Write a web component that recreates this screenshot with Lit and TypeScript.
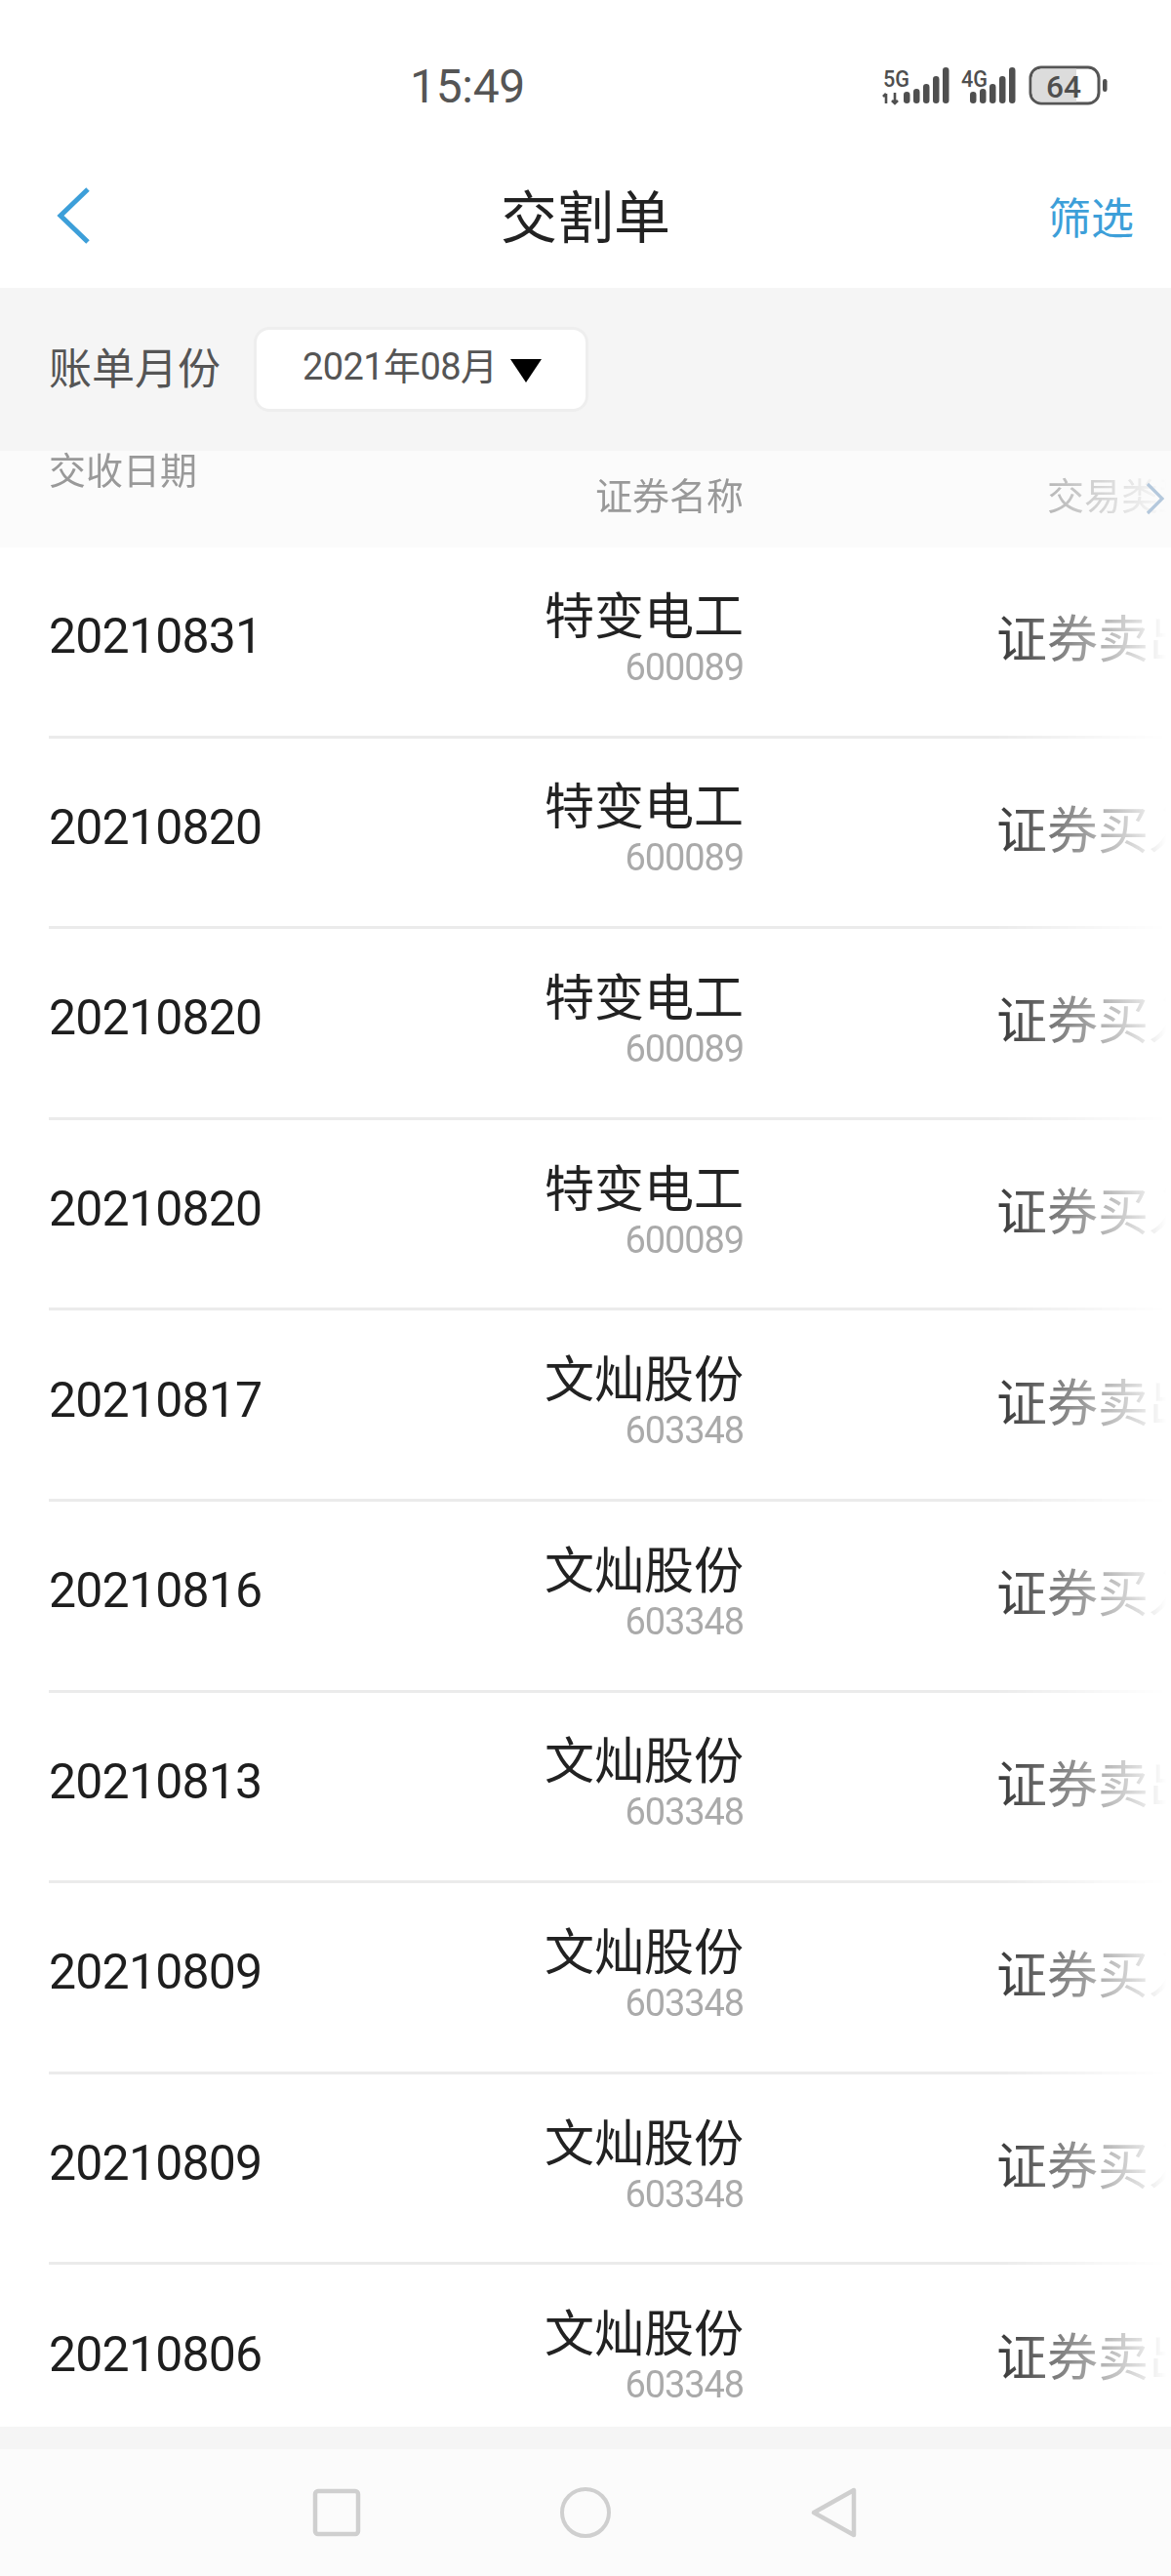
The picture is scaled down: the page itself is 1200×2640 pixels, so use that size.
import { LitElement, html, svg, css } from "lit";
import { customElement } from "lit/decorators.js";

const rows = [
  ["20210831", "特变电工", "600089", "证券卖出"],
  ["20210820", "特变电工", "600089", "证券买入"],
  ["20210820", "特变电工", "600089", "证券买入"],
  ["20210820", "特变电工", "600089", "证券买入"],
  ["20210817", "文灿股份", "603348", "证券卖出"],
  ["20210816", "文灿股份", "603348", "证券买入"],
  ["20210813", "文灿股份", "603348", "证券卖出"],
  ["20210809", "文灿股份", "603348", "证券买入"],
  ["20210809", "文灿股份", "603348", "证券买入"],
  ["20210806", "文灿股份", "603348", "证券卖出"],
];

const bars = (xs: number[]) =>
  xs.map((x, i) => {
    const h = [12, 15, 20, 28, 37][i];
    return svg`<rect x="${x}" y="${107 - h}" width="6.5" height="${h}" rx="3.2" fill="#4f4f4f"></rect>`;
  });

@customElement("app-root")
export class AppRoot extends LitElement {
  static styles = css`
    :host {
      display: block;
      width: 1200px;
      height: 2640px;
      background: #fff;
      overflow: hidden;
      font-family: "Roboto", "Noto Sans CJK SC", sans-serif;
    }
    .page { display: flex; flex-direction: column; height: 2640px; }
    .status {
      height: 175px; flex: none; display: flex; align-items: flex-start;
      padding: 61px 64px 0 420px; box-sizing: border-box;
    }
    .time { font-size: 48px; line-height: 56px; color: #555; letter-spacing: -0.3px; }
    .status svg { margin-left: auto; margin-top: 4px; display: block; }
    .status svg text { font-family: "Roboto", sans-serif; font-weight: 500; fill: #4f4f4f; }
    .nav {
      height: 120px; flex: none; display: flex; align-items: center; box-sizing: border-box;
      justify-content: space-between; padding: 0 38px 28px 56px; position: relative;
    }
    .nav svg { display: block; }
    .title {
      position: absolute; left: 0; right: 0; top: 0; bottom: 32px; display: flex;
      align-items: center; justify-content: center; font-size: 58px; color: #222;
      line-height: 1; font-family: "Noto Sans CJK SC", sans-serif;
    }
    .filter { position: relative; font-size: 44px; line-height: 1; color: #3d9fd9; font-family: "Noto Sans CJK SC", sans-serif; }
    .bar {
      height: 167px; flex: none; background: #f5f5f5; box-sizing: border-box;
      display: flex; align-items: flex-start; padding: 40px 0 0 50px;
    }
    .bar-label {
      font-size: 44px; line-height: 81px; color: #555; width: 210px;
      font-family: "Noto Sans CJK SC", sans-serif;
    }
    .month {
      width: 343px; height: 87px; box-sizing: border-box; background: #fff;
      border: 3px solid #eeeeee; border-radius: 16px; display: flex; align-items: center;
      padding: 0 0 12px 47px; font-size: 38px; color: #555;
    }
    .month span { white-space: nowrap; letter-spacing: -0.6px; }
    .tri {
      width: 0; height: 0; margin: 14px 0 0 14px; border-left: 16px solid transparent;
      border-right: 16px solid transparent; border-top: 24px solid #000;
    }
    .head { height: 99px; flex: none; background: #fbfbfb; position: relative; }
    .cols {
      display: grid; grid-template-columns: 400px 312px 1fr; width: 1200px;
      box-sizing: border-box; padding-left: 50px;
    }
    .fade {
      -webkit-mask-image: linear-gradient(to right, #000 1020px, transparent 1195px);
      mask-image: linear-gradient(to right, #000 1020px, transparent 1195px);
    }
    .head .cols { font-size: 38px; line-height: 40px; color: #999; height: 99px; font-family: "Noto Sans CJK SC", sans-serif; }
    .h1 { margin-top: -2px; }
    .h2 { margin-top: 24px; text-align: right; }
    .h3 { margin-top: 24px; margin-left: 311px; white-space: nowrap; }
    .chev { position: absolute; left: 1172px; top: 31px; display: block; }
    .list { height: 1926px; flex: none; overflow: hidden; }
    .row { height: 195.6px; box-sizing: border-box; }
    .row .cols { height: 192.6px; align-items: center; }
    .sep { height: 3px; margin-left: 50px; background: #ebebeb; }
    .date { font-size: 50px; line-height: 56px; color: #1e1e1e; letter-spacing: -0.8px; margin-top: -10px; }
    .name { text-align: right; margin-top: -12px; }
    .name b {
      display: block; font-weight: 400; font-size: 51px; line-height: 56px; color: #222;
      font-family: "Noto Sans CJK SC", sans-serif;
    }
    .name i { display: block; font-style: normal; font-size: 38px; line-height: 38px; color: #aaa; letter-spacing: -1.1px; margin-top: 9px; }
    .type {
      margin-left: 259px; font-size: 52px; line-height: 60px; color: #333; white-space: nowrap;
      font-family: "Noto Sans CJK SC", sans-serif; margin-top: -10px;
    }
    .gap { height: 23px; flex: none; background: #f5f5f5; }
    .sys {
      flex: 1; background: #fbfbfb; display: flex; align-items: center; justify-content: center;
      gap: 203px;
    }
    .sys svg { display: block; }
  `;

  render() {
    return html`
      <div class="page">
        <div class="status">
          <div class="time">15:49</div>
          <svg width="232" height="48" viewBox="904 66 232 48">
            <text x="905" y="90" font-size="24" textLength="27" lengthAdjust="spacingAndGlyphs">5G</text>
            <path d="M908 97 v10 M905 100 l3-3 M917 96 v11 M914 104 l3 3 l3-3" stroke="#4f4f4f" stroke-width="2.6" fill="none"></path>
            ${bars([926, 936, 946, 956, 966])}
            <text x="985" y="90" font-size="24" textLength="27" lengthAdjust="spacingAndGlyphs">4G</text>
            ${bars([994, 1004, 1014, 1024, 1034])}
            <rect x="1056" y="70" width="70" height="37" rx="11" fill="#fff" stroke="#555" stroke-width="3"></rect>
            <path d="M1067 71.5 h36 v34 h-36 a9.5 9.5 0 0 1 -9.5 -9.5 v-15 a9.5 9.5 0 0 1 9.5 -9.5 z" fill="#dcdcdc"></path>
            <text x="1072" y="101" font-size="32" textLength="36" lengthAdjust="spacingAndGlyphs">64</text>
            <rect x="1130" y="82" width="4.5" height="13" rx="2.2" fill="#4f4f4f"></rect>
          </svg>
        </div>
        <div class="nav">
          <div class="title">交割单</div>
          <svg width="40" height="62" viewBox="0 0 40 62" style="position:relative">
            <path d="M34 4 L6 31 L34 58" fill="none" stroke="#3d9fd9" stroke-width="5"></path>
          </svg>
          <div class="filter">筛选</div>
        </div>
        <div class="bar">
          <div class="bar-label">账单月份</div>
          <div class="month"><span>2021年08月</span><div class="tri"></div></div>
        </div>
        <div class="head">
          <div class="cols fade">
            <div class="h1">交收日期</div>
            <div class="h2">证券名称</div>
            <div class="h3">交易类型</div>
          </div>
          <svg class="chev" width="24" height="36" viewBox="0 0 24 36">
            <path d="M4 3 L19 18 L4 33" fill="none" stroke="#b4c8dc" stroke-width="3.2"></path>
          </svg>
        </div>
        <div class="list fade">
          ${rows.map(
            (r) => html`
              <div class="row">
                <div class="cols">
                  <div class="date">${r[0]}</div>
                  <div class="name"><b>${r[1]}</b><i>${r[2]}</i></div>
                  <div class="type">${r[3]}</div>
                </div>
                <div class="sep"></div>
              </div>
            `
          )}
        </div>
        <div class="gap"></div>
        <div class="sys">
          <svg width="52" height="52" viewBox="0 0 52 52">
            <rect x="4" y="4" width="44" height="44" rx="3" fill="none" stroke="#cfcfcf" stroke-width="4.5"></rect>
          </svg>
          <svg width="52" height="52" viewBox="0 0 52 52">
            <circle cx="26" cy="26" r="24" fill="none" stroke="#cfcfcf" stroke-width="4"></circle>
          </svg>
          <svg width="52" height="52" viewBox="0 0 52 52">
            <path d="M46 3 V49 L5 26 Z" fill="none" stroke="#cfcfcf" stroke-width="4.5" stroke-linejoin="round"></path>
          </svg>
        </div>
      </div>
    `;
  }
}
